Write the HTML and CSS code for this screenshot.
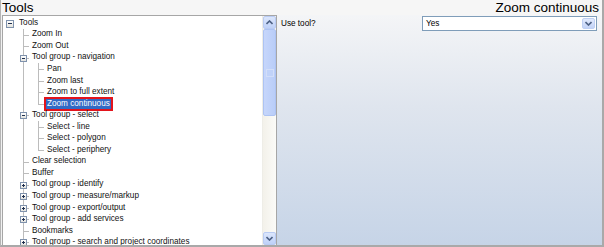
FILE: index.html
```html
<!DOCTYPE html>
<html lang="en">

<head>
  <meta charset="UTF-8">
  <meta name="viewport" content="width=device-width, initial-scale=1.0">
  <title>Tools</title>
  <link rel="stylesheet" href="styles.css">
</head>

<body>
  <div class="app">
    <div class="header">
      <div class="caption">Tools</div>
      <div class="caption">Zoom continuous</div>
    </div>
    <div class="main">
      <div class="tree-panel">
        <div class="tree">
          <ul class="root">
            <li class="group">
              <div class="row"><span class="toggle minus"></span><span class="label">Tools</span></div>
              <ul>
                <li><div class="row"><span class="label">Zoom In</span></div></li>
                <li><div class="row"><span class="label">Zoom Out</span></div></li>
                <li class="group">
                  <div class="row"><span class="toggle minus"></span><span class="label">Tool group - navigation</span></div>
                  <ul>
                    <li><div class="row"><span class="label">Pan</span></div></li>
                    <li><div class="row"><span class="label">Zoom last</span></div></li>
                    <li><div class="row"><span class="label">Zoom to full extent</span></div></li>
                    <li><div class="row"><span class="label selected">Zoom continuous</span></div></li>
                  </ul>
                </li>
                <li class="group">
                  <div class="row"><span class="toggle minus"></span><span class="label">Tool group - select</span></div>
                  <ul>
                    <li><div class="row"><span class="label">Select - line</span></div></li>
                    <li><div class="row"><span class="label">Select - polygon</span></div></li>
                    <li><div class="row"><span class="label">Select - periphery</span></div></li>
                  </ul>
                </li>
                <li><div class="row"><span class="label">Clear selection</span></div></li>
                <li><div class="row"><span class="label">Buffer</span></div></li>
                <li class="group"><div class="row"><span class="toggle plus"></span><span class="label">Tool group - identify</span></div></li>
                <li class="group"><div class="row"><span class="toggle plus"></span><span class="label">Tool group - measure/markup</span></div></li>
                <li class="group"><div class="row"><span class="toggle plus"></span><span class="label">Tool group - export/output</span></div></li>
                <li class="group"><div class="row"><span class="toggle plus"></span><span class="label">Tool group - add services</span></div></li>
                <li><div class="row"><span class="label">Bookmarks</span></div></li>
                <li class="group"><div class="row"><span class="toggle plus"></span><span class="label">Tool group - search and project coordinates</span></div></li>
              </ul>
            </li>
          </ul>
        </div>
        <div class="scrollbar">
          <div class="sb-btn">
            <svg width="7" height="5" viewBox="0 0 7 5"><path d="M0.5 4 L3.5 1 L6.5 4" fill="none" stroke="#4d6185" stroke-width="1.6"/></svg>
          </div>
          <div class="sb-thumb"><span class="grip"></span></div>
          <div class="sb-track"></div>
          <div class="sb-btn">
            <svg width="7" height="5" viewBox="0 0 7 5"><path d="M0.5 1 L3.5 4 L6.5 1" fill="none" stroke="#4d6185" stroke-width="1.6"/></svg>
          </div>
        </div>
      </div>
      <div class="props">
        <div class="prop-row">
          <span class="prop-label">Use tool?</span>
          <div class="select">
            <span class="select-value">Yes</span>
            <span class="select-btn">
              <svg width="7" height="5" viewBox="0 0 7 5"><path d="M0.5 1 L3.5 4 L6.5 1" fill="none" stroke="#4d6185" stroke-width="1.6"/></svg>
            </span>
          </div>
        </div>
      </div>
    </div>
  </div>
</body>

</html>
```

FILE: styles.css
```css
html,
body {
  margin: 0;
  padding: 0;
}

body {
  font-family: "Liberation Sans", Arial, sans-serif;
  color: #000;
}

.app {
  width: 604px;
  height: 247px;
  box-sizing: border-box;
  background: #f1f1f1;
  border-left: 1px solid #b5b5b5;
  border-right: 2px solid #a9a9a9;
  border-bottom: 2px solid #a9a9a9;
  display: flex;
  flex-direction: column;
}

.header {
  height: 15px;
  display: flex;
  justify-content: space-between;
  align-items: center;
  padding: 0 3px 0 1px;
  background: #f6f6f6;
}

.caption {
  font-size: 13.5px;
  line-height: 15px;
}

.main {
  flex: 1;
  display: flex;
  min-height: 0;
}

.tree-panel {
  width: 273px;
  margin-left: 1px;
  border: 1px solid #a6a6a6;
  border-bottom: none;
  background: #fff;
  display: flex;
  min-height: 0;
}

.tree {
  flex: 1;
  overflow: hidden;
  padding-top: 1px;
  font-size: 8.2px;
  color: #111;
}

.tree ul {
  list-style: none;
  margin: 0;
  padding: 0;
}

.tree li {
  position: relative;
  padding-left: 9px;
}

.tree .root > li {
  padding-left: 16px;
}

.tree .root > li > ul {
  margin-left: 4px;
}

.tree li li > ul {
  margin-left: 6px;
}

/* connector lines */
.tree li li::before {
  content: "";
  position: absolute;
  left: 0;
  top: 6px;
  width: 6px;
  border-top: 1px solid #bcbcbc;
}

.tree li li::after {
  content: "";
  position: absolute;
  left: 0;
  top: 0;
  bottom: 0;
  border-left: 1px solid #bcbcbc;
}

.tree li li:last-child::after {
  bottom: auto;
  height: 6px;
}

.row {
  height: 11.55px;
  display: flex;
  align-items: center;
  white-space: nowrap;
}

.toggle {
  position: absolute;
  left: -3px;
  top: 3px;
  width: 5px;
  height: 5px;
  border: 1px solid #7f92ad;
  background: linear-gradient(#fff, #e3e3de);
  z-index: 1;
}

.root > li > .row .toggle {
  left: 3px;
  top: 2.5px;
  width: 6px;
  height: 6px;
}

.toggle::before,
.toggle.plus::after {
  content: "";
  position: absolute;
  background: #1f2f4f;
}

.toggle::before {
  left: 1px;
  right: 1px;
  top: 50%;
  height: 1px;
  margin-top: -0.5px;
}

.toggle.plus::after {
  top: 1px;
  bottom: 1px;
  left: 50%;
  width: 1px;
  margin-left: -0.5px;
}

.label {
  line-height: 10px;
}

.label.selected {
  margin-left: -3px;
  padding: 0 1px;
  border: 2px solid #e3141c;
  background: #316ac5;
  color: #fff;
}

/* scrollbar */
.scrollbar {
  width: 13px;
  display: flex;
  flex-direction: column;
  background: #f6f5f0;
  border-left: 1px solid #eeede7;
}

.sb-btn {
  height: 13px;
  box-sizing: border-box;
  border: 1px solid #b9cbf3;
  border-radius: 2px;
  background: linear-gradient(#dbe6fc, #bfd1f8);
  display: flex;
  align-items: center;
  justify-content: center;
}

.sb-thumb {
  height: 87px;
  box-sizing: border-box;
  border: 1px solid #adc3f3;
  border-radius: 2px;
  background: linear-gradient(to right, #c6d6fb, #b9cdf8);
  display: flex;
  align-items: center;
  justify-content: center;
}

.grip {
  width: 6px;
  height: 6px;
  border: 1px solid #d2def9;
  background: #c0d2f9;
}

.sb-track {
  flex: 1;
  background: linear-gradient(to right, #f3f1ea, #fbfbf8);
}

/* property pane */
.props {
  flex: 1;
  background: linear-gradient(#f4f5f7, #dfe5ee 40%, #c6d4e7);
  padding: 1px 5px 0 4px;
  font-size: 8.2px;
}

.prop-row {
  display: flex;
  justify-content: space-between;
  align-items: center;
}

.select {
  width: 175px;
  height: 15px;
  box-sizing: border-box;
  border: 1px solid #7f9db9;
  background: #fff;
  display: flex;
  align-items: center;
  justify-content: space-between;
  padding: 1px 1px 1px 3px;
}

.select-btn {
  width: 13px;
  height: 11px;
  box-sizing: border-box;
  border: 1px solid #bfd0f4;
  border-radius: 2px;
  background: linear-gradient(#e2eafd, #c2d3f7);
  display: flex;
  align-items: center;
  justify-content: center;
}
```
